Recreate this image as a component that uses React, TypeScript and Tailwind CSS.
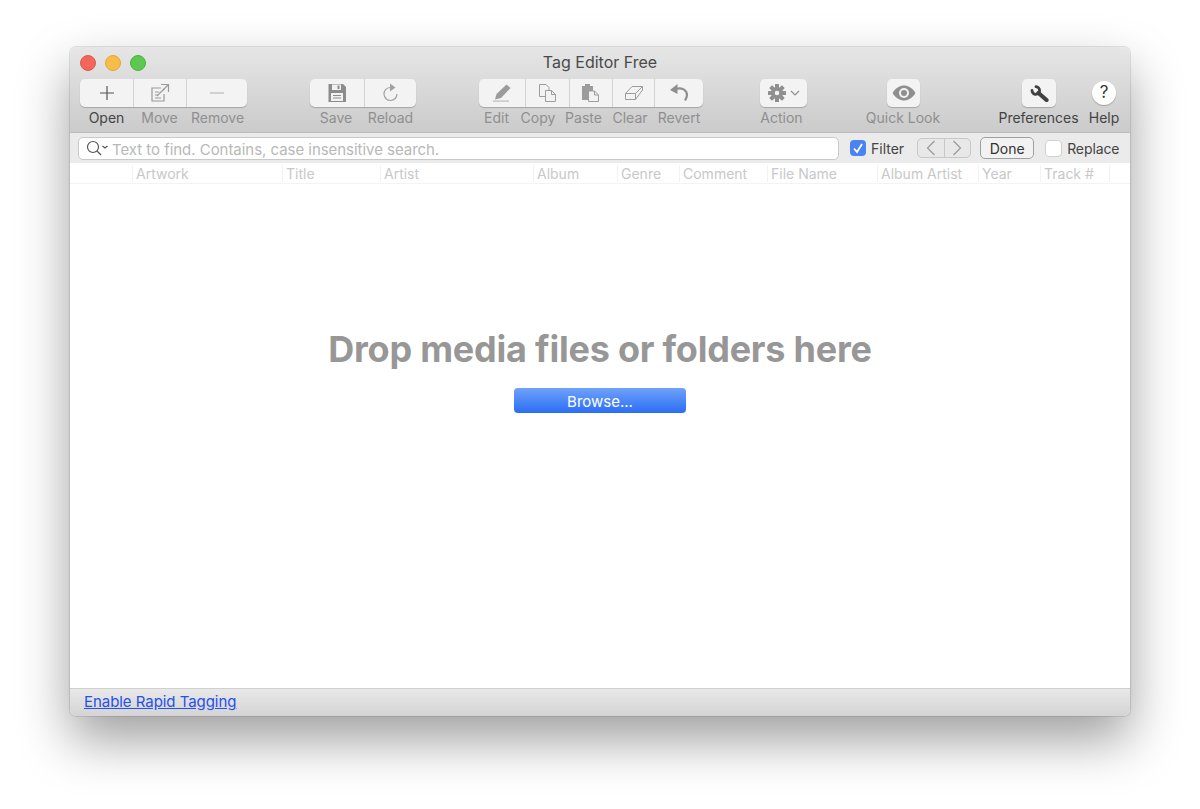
import type { ReactNode } from "react";

function MoveIcon() {
  return (
    <svg width="20" height="20" viewBox="0 0 20 20" fill="none" stroke="#9a9a9a" strokeWidth="1.2">
      <path d="M11 5H2v13h12v-7" />
      <path d="M5 9h4M5 12h3M5 15h6" strokeWidth="1" />
      <path d="M7 13L18 2M11 1.500h7.500V9" />
      <path d="M14 5.500v2" strokeWidth="1" />
    </svg>
  );
}

function SaveIcon() {
  return (
    <svg width="20" height="20" viewBox="0 0 20 20">
      <path fill="#8c8c8c" d="M1.500 1h14.500l3 3v15h-17.500z" />
      <rect x="5" y="1.500" width="9" height="5.500" fill="#f2f2f2" />
      <rect x="10.500" y="2.500" width="2" height="3.500" fill="#8c8c8c" />
      <rect x="4" y="10" width="12" height="8" fill="#f2f2f2" />
      <path d="M6 12.500h8M6 15h8" stroke="#8c8c8c" strokeWidth="1" />
    </svg>
  );
}

function ReloadIcon() {
  return (
    <svg width="18" height="20" viewBox="0 0 18 20" fill="none">
      <path d="M8 4.500a6.500 6.500 0 1 0 7 6.500" stroke="#a2a2a2" strokeWidth="1.200" />
      <path d="M8 0.500l5.500 4-5.500 4z" fill="#a2a2a2" />
    </svg>
  );
}

function PencilIcon() {
  return (
    <svg width="20" height="20" viewBox="0 0 20 20">
      <path fill="#9c9c9c" d="M14.500 1.500l4 3.500-9.500 10-6 1.500 1.500-5.500z" />
      <rect x="1" y="17.500" width="16" height="1.200" fill="#bcbcbc" />
    </svg>
  );
}

function CopyIcon() {
  return (
    <svg width="20" height="20" viewBox="0 0 20 20" fill="none" stroke="#9c9c9c" strokeWidth="1">
      <path d="M1.500 1.500h6.500l3 3v9H1.500z" />
      <path d="M7.500 7.500h6l4 4v7h-10z" fill="#f2f2f2" />
      <path d="M13.500 7.500v4h4" />
    </svg>
  );
}

function PasteIcon() {
  return (
    <svg width="20" height="20" viewBox="0 0 20 20">
      <path fill="#9c9c9c" d="M1 3h3V1h5v2h3v14H1z" />
      <path d="M7.500 8h6l4 4v6.500h-10z" fill="#f2f2f2" stroke="#9c9c9c" />
      <path d="M13.500 8v4h4" fill="none" stroke="#9c9c9c" />
    </svg>
  );
}

function EraserIcon() {
  return (
    <svg width="20" height="16" viewBox="0 0 20 16" fill="none" stroke="#9c9c9c" strokeWidth="1">
      <path d="M1.500 14.500V8.500L8 1.500h10.500V5l-7 9.500z" />
      <path d="M1.500 8.500h10l7-7M11.500 8.500v6" />
    </svg>
  );
}

function UndoIcon() {
  return (
    <svg width="20" height="18" viewBox="0 0 20 18">
      <path d="M6 5c7-2 12 1 12 6 0 2-.8 3.500-2 5.500" fill="none" stroke="#8f8f8f" strokeWidth="2.200" />
      <path d="M8.500 0v10L1 6z" fill="#8f8f8f" />
    </svg>
  );
}

function GearIcon() {
  const teeth = [0, 45, 90, 135];
  return (
    <svg width="18" height="18" viewBox="0 0 18 18">
      {teeth.map((deg) => (
        <rect key={deg} x="7" y="0" width="4" height="18" rx="0.500" fill="#8f8f8f" transform={`rotate(${deg} 9 9)`} />
      ))}
      <circle cx="9" cy="9" r="6" fill="#8f8f8f" />
      <circle cx="9" cy="9" r="2.300" fill="#f2f2f2" />
    </svg>
  );
}

function EyeIcon() {
  return (
    <svg width="24" height="16" viewBox="0 0 24 16">
      <path d="M0.500 8C4 2.500 8 0.500 12 0.500S20 2.500 23.500 8C20 13.500 16 15.500 12 15.500S4 13.500 0.500 8z" fill="#8f8f8f" />
      <circle cx="12" cy="8" r="5" fill="#f2f2f2" />
      <circle cx="12" cy="8" r="3" fill="#8f8f8f" />
    </svg>
  );
}

function WrenchIcon() {
  return (
    <svg width="20" height="18" viewBox="0 0 20 18" fill="none" stroke="#414141" strokeLinecap="round">
      <path d="M3 6.500A3.800 3.800 0 1 0 7 2.700" strokeWidth="2.800" />
      <path d="M9.500 9l8 7" strokeWidth="4.200" />
    </svg>
  );
}

type SegmentProps = {
  className: string;
  label: string;
  active?: boolean;
  icon: ReactNode;
  last?: boolean;
  labelClass?: string;
};

function Segment({ className, label, active, icon, last, labelClass }: SegmentProps) {
  return (
    <div className={`flex flex-col items-center ${className}`}>
      <div className={`flex h-[28px] w-full items-center justify-center ${last ? "" : "border-r border-[#d2d2d2]"}`}>{icon}</div>
      <span className={`mt-[2px] whitespace-nowrap text-[14px] leading-[18px] ${active ? "text-[#444444]" : "text-[#8f8f8f]"} ${labelClass ?? ""}`}>{label}</span>
    </div>
  );
}

function Group({ children, className }: { children: ReactNode; className?: string }) {
  return (
    <div className={`relative flex ${className ?? ""}`}>
      <div className="absolute left-0 right-0 top-0 h-[28px] rounded-[5px] bg-[#f3f3f3] shadow-[0_1px_1px_rgba(0,0,0,0.22)]" />
      <div className="relative flex">{children}</div>
    </div>
  );
}

const columns = [
  { name: "", width: "w-[62px]" },
  { name: "Artwork", width: "w-[150px]" },
  { name: "Title", width: "w-[98px]" },
  { name: "Artist", width: "w-[153px]" },
  { name: "Album", width: "w-[84px]" },
  { name: "Genre", width: "w-[62px]" },
  { name: "Comment", width: "w-[88px]" },
  { name: "File Name", width: "w-[110px]" },
  { name: "Album Artist", width: "w-[101px]" },
  { name: "Year", width: "w-[62px]" },
  { name: "Track #", width: "w-[69px]" },
];

export default function App() {
  return (
    <div className="h-[809px] w-[1200px] overflow-hidden bg-white pl-[70px] pt-[47px] font-['Inter','Liberation_Sans',sans-serif]">
      <div className="flex h-[669px] w-[1060px] flex-col overflow-hidden rounded-[6px] shadow-[0_0_0_1px_rgba(0,0,0,0.1),0_24px_52px_0_rgba(0,0,0,0.38)]">
        {/* title bar and toolbar */}
        <div className="h-[86px] shrink-0 border-b border-[#bdbdbd] bg-gradient-to-b from-[#e6e6e6] to-[#cbcbcb]">
          <div className="relative flex h-[32px] items-center pl-[10px]">
            <div className="flex gap-[9px]">
              <span className="h-[16px] w-[16px] rounded-full border border-[#e2574c] bg-[#f2665c]" />
              <span className="h-[16px] w-[16px] rounded-full border border-[#e1a73e] bg-[#f7bd45]" />
              <span className="h-[16px] w-[16px] rounded-full border border-[#4fb043] bg-[#5cc84f]" />
            </div>
            <span className="absolute left-0 right-0 top-[5px] text-center text-[16px] leading-[20px] text-[#4a4a4a]">Tag Editor Free</span>
          </div>

          <div className="flex pl-[10px]">
            <Group>
              <Segment
                className="w-[54px]"
                label="Open"
                active
                labelClass="mr-[1px]"
                icon={
                  <svg width="16" height="16" viewBox="0 0 16 16" stroke="#555555" strokeWidth="1.200">
                    <path d="M8 1v14M1 8h14" />
                  </svg>
                }
              />
              <Segment className="w-[53px]" label="Move" labelClass="mr-[2px]" icon={<MoveIcon />} />
              <Segment
                className="w-[60px]"
                label="Remove"
                last
                labelClass="ml-[1px]"
                icon={
                  <svg width="16" height="16" viewBox="0 0 16 16" stroke="#b0b0b0" strokeWidth="1.200">
                    <path d="M1 8h14" />
                  </svg>
                }
              />
            </Group>
            <Group className="ml-[63px]">
              <Segment className="w-[55px]" label="Save" labelClass="mr-[3px]" icon={<SaveIcon />} />
              <Segment className="w-[51px]" label="Reload" last icon={<ReloadIcon />} />
            </Group>
            <Group className="ml-[63px]">
              <Segment className="w-[47px]" label="Edit" labelClass="mr-[12px]" icon={<PencilIcon />} />
              <Segment className="w-[44px]" label="Copy" labelClass="mr-[20px]" icon={<CopyIcon />} />
              <Segment className="w-[43px]" label="Paste" labelClass="mr-[16px]" icon={<PasteIcon />} />
              <Segment className="w-[42px]" label="Clear" labelClass="mr-[8px]" icon={<EraserIcon />} />
              <Segment className="w-[48px]" label="Revert" last icon={<UndoIcon />} />
            </Group>
            <Group className="ml-[57px]">
              <Segment
                className="w-[47px]"
                label="Action"
                last
                labelClass="mr-[4px]"
                icon={
                  <div className="flex items-center gap-[4px]">
                    <GearIcon />
                    <svg width="10" height="6" viewBox="0 0 10 6" fill="none" stroke="#8f8f8f" strokeWidth="1.200">
                      <path d="M1 1l4 4 4-4" />
                    </svg>
                  </div>
                }
              />
            </Group>
            <Group className="ml-[80px]">
              <Segment className="w-[33px]" label="Quick Look" last labelClass="mr-[1px]" icon={<EyeIcon />} />
            </Group>
            <Group className="ml-[102px]">
              <Segment className="w-[34px]" label="Preferences" active last labelClass="mr-[1px]" icon={<WrenchIcon />} />
            </Group>
            <div className="ml-[36px] flex w-[24px] flex-col items-center">
              <div className="flex h-[28px] items-center">
                <span className="flex h-[24px] w-[24px] items-center justify-center rounded-full bg-white text-[17px] text-[#333333] shadow-[0_1px_1px_rgba(0,0,0,0.25)]">?</span>
              </div>
              <span className="mt-[2px] text-[14px] leading-[18px] text-[#444444]">Help</span>
            </div>
          </div>
        </div>

        {/* find bar */}
        <div className="flex h-[30px] shrink-0 items-center bg-[#ebebeb] pl-[8px]">
          <div className="flex h-[23px] w-[761px] items-center rounded-[5px] border border-[#c9c9c9] bg-white pl-[7px]">
            <svg width="22" height="16" viewBox="0 0 22 16" fill="none" stroke="#555555" strokeWidth="1.200">
              <circle cx="7" cy="7" r="5.500" />
              <path d="M11 11l4 4M16.500 6l2.500 2 2.500-2" />
            </svg>
            <span className="ml-[4px] pt-[3px] text-[15px] leading-[18px] tracking-[-0.04px] text-[#b8b8b8]">Text to find. Contains, case insensitive search.</span>
          </div>
          <span className="ml-[11px] flex h-[16px] w-[16px] items-center justify-center rounded-[4px] bg-[#4a84f2]">
            <svg width="12" height="12" viewBox="0 0 12 12" fill="none" stroke="white" strokeWidth="1.800">
              <path d="M2 6.500l3 3.500 5-8" />
            </svg>
          </span>
          <span className="ml-[5px] text-[14px] text-[#444444]">Filter</span>
          <div className="ml-[13px] flex h-[20px] w-[54px] rounded-[5px] border border-[#c8c8c8] bg-[#e8e8e8]">
            <div className="flex flex-1 items-center justify-center border-r border-[#c8c8c8]">
              <svg width="10" height="16" viewBox="0 0 10 16" fill="none" stroke="#9a9a9a" strokeWidth="1.200">
                <path d="M8.500 1L1.500 8l7 7" />
              </svg>
            </div>
            <div className="flex flex-1 items-center justify-center">
              <svg width="10" height="16" viewBox="0 0 10 16" fill="none" stroke="#9a9a9a" strokeWidth="1.200">
                <path d="M1.500 1l7 7-7 7" />
              </svg>
            </div>
          </div>
          <div className="ml-[9px] flex h-[22px] w-[54px] items-center justify-center rounded-[5px] border border-[#a0a0a0] bg-[#f2f2f2] text-[14px] text-[#333333]">Done</div>
          <span className="ml-[11px] h-[17px] w-[17px] rounded-[4px] border border-[#d0d0d0] bg-white" />
          <span className="ml-[5px] text-[14px] tracking-[-0.1px] text-[#444444]">Replace</span>
        </div>

        {/* column headers */}
        <div className="flex h-[21px] shrink-0 items-center border-b border-[#f3f3f3] bg-white">
          {columns.map((col, i) => (
            <div
              key={col.name}
              className={`h-[17px] whitespace-nowrap pl-[3px] text-[14px] leading-[17px] text-[#c8c8c8] ${col.width} ${i > 0 ? "border-l border-[#f2f2f2]" : ""}`}
            >
              {col.name}
            </div>
          ))}
          <div className="h-[17px] border-l border-[#f2f2f2]" />
        </div>

        {/* drop area */}
        <div className="flex flex-1 flex-col items-center bg-white pt-[142px]">
          <h1 className="text-[36px] font-bold leading-[46px] tracking-[-0.23px] text-[#979797]">Drop media files or folders here</h1>
          <button className="mt-[16px] flex h-[25px] w-[172px] items-center justify-center rounded-[4px] bg-gradient-to-b from-[#6fa1f8] to-[#2a6cf6] pt-[2px] text-[15px] leading-[18px] text-white">Browse...</button>
        </div>

        {/* footer */}
        <div className="flex h-[28px] shrink-0 items-center border-t border-[#cfcfcf] bg-gradient-to-b from-[#e8e8e8] to-[#d4d4d4] pl-[14px]">
          <a href="#" className="text-[15px] tracking-[-0.05px] text-[#2450ee] underline">Enable Rapid Tagging</a>
        </div>
      </div>
    </div>
  );
}
